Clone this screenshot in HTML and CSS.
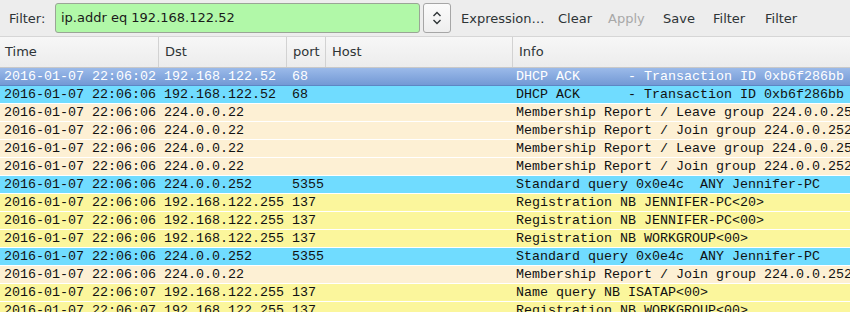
FILE: index.html
```html
<!DOCTYPE html>
<html lang="en">
<head>
    <meta charset="UTF-8">
    <link rel="stylesheet" href="styles.css">
</head>
<body>
<div class="toolbar">
    <span class="filter-label">Filter:</span>
    <div class="filter-input">ip.addr eq 192.168.122.52</div>
    <div class="combo">
        <svg width="10" height="14" viewBox="0 0 10 14">
            <path d="M1.5 5 L5 1.5 L8.5 5 M1.5 9 L5 12.5 L8.5 9" fill="none" stroke="#2e3436" stroke-width="1.4"/>
        </svg>
    </div>
    <span class="tool-btn expr">Expression…</span>
    <span class="tool-btn clear">Clear</span>
    <span class="tool-btn apply disabled">Apply</span>
    <span class="tool-btn save">Save</span>
    <span class="tool-btn filter">Filter</span>
    <span class="tool-btn">Filter</span>
</div>

<div class="list-header">
    <div class="col">Time</div>
    <div class="col">Dst</div>
    <div class="col">port</div>
    <div class="col">Host</div>
    <div class="col last">Info</div>
</div>

<div class="packets" id="packets"></div>

<script>
    const packets = [
        ['2016-01-07 22:06:02', '192.168.122.52', '68', 'DHCP ACK      - Transaction ID 0xb6f286bb', 'selected'],
        ['2016-01-07 22:06:06', '192.168.122.52', '68', 'DHCP ACK      - Transaction ID 0xb6f286bb', 'cyan'],
        ['2016-01-07 22:06:06', '224.0.0.22', '', 'Membership Report / Leave group 224.0.0.252', 'beige'],
        ['2016-01-07 22:06:06', '224.0.0.22', '', 'Membership Report / Join group 224.0.0.252', 'beige'],
        ['2016-01-07 22:06:06', '224.0.0.22', '', 'Membership Report / Leave group 224.0.0.252', 'beige'],
        ['2016-01-07 22:06:06', '224.0.0.22', '', 'Membership Report / Join group 224.0.0.252', 'beige'],
        ['2016-01-07 22:06:06', '224.0.0.252', '5355', 'Standard query 0x0e4c  ANY Jennifer-PC', 'cyan'],
        ['2016-01-07 22:06:06', '192.168.122.255', '137', 'Registration NB JENNIFER-PC<20>', 'yellow'],
        ['2016-01-07 22:06:06', '192.168.122.255', '137', 'Registration NB JENNIFER-PC<00>', 'yellow'],
        ['2016-01-07 22:06:06', '192.168.122.255', '137', 'Registration NB WORKGROUP<00>', 'yellow'],
        ['2016-01-07 22:06:06', '224.0.0.252', '5355', 'Standard query 0x0e4c  ANY Jennifer-PC', 'cyan'],
        ['2016-01-07 22:06:06', '224.0.0.22', '', 'Membership Report / Join group 224.0.0.252', 'beige'],
        ['2016-01-07 22:06:07', '192.168.122.255', '137', 'Name query NB ISATAP<00>', 'yellow'],
        ['2016-01-07 22:06:07', '192.168.122.255', '137', 'Registration NB WORKGROUP<00>', 'yellow']
    ];

    const list = document.getElementById('packets');
    packets.forEach(p => {
        const row = document.createElement('div');
        row.className = 'row ' + p[4];
        [p[0], p[1], p[2], '', p[3]].forEach(text => {
            const cell = document.createElement('span');
            cell.textContent = text;
            row.appendChild(cell);
        });
        list.appendChild(row);
    });
</script>
</body>
</html>
```

FILE: styles.css
```css
body {
    margin: 0;
    width: 850px;
    height: 312px;
    overflow: hidden;
    background: #ffffff;
    font-family: 'DejaVu Sans', sans-serif;
    font-size: 13px;
    color: #2e3436;
}
.toolbar {
    height: 36px;
    display: flex;
    align-items: center;
    background: #ededed;
    border-bottom: 1px solid #d6d6d6;
    padding-left: 9px;
}
.filter-label {
    width: 46px;
    flex-shrink: 0;
}
.filter-input {
    width: 358px;
    height: 28px;
    line-height: 28px;
    padding-left: 5px;
    flex-shrink: 0;
    background: #b1f8a8;
    border: 1px solid #9aa596;
    border-radius: 3px;
    color: #1a1a1a;
}
.combo {
    width: 26px;
    height: 28px;
    margin-left: 3px;
    flex-shrink: 0;
    display: flex;
    align-items: center;
    justify-content: center;
    background: linear-gradient(#fbfbfb, #eeeeee);
    border: 1px solid #a6a6a6;
    border-radius: 3px;
}
.tool-btn {
    flex-shrink: 0;
    white-space: nowrap;
}
.tool-btn.expr {
    margin-left: 10px;
    width: 97px;
}
.tool-btn.clear,
.tool-btn.save {
    width: 50px;
}
.tool-btn.apply {
    width: 55px;
}
.tool-btn.filter {
    width: 52px;
}
.tool-btn.disabled {
    color: #a8a8a8;
}
.list-header {
    height: 30px;
    display: grid;
    grid-template-columns: 159px 128px 39px 187px 1fr;
    align-items: center;
    background: linear-gradient(#f7f7f7, #ececec);
    border-bottom: 1px solid #c8c8c8;
}
.list-header .col {
    height: 30px;
    line-height: 30px;
    padding-left: 6px;
    border-right: 1px solid #d2d2d2;
    box-sizing: border-box;
}
.list-header .col:first-child {
    padding-left: 5px;
}
.list-header .col.last {
    border-right: none;
}
.packets {
    font-family: 'Liberation Mono', monospace;
    font-size: 13.33px;
    color: #111111;
}
.row {
    height: 17px;
    line-height: 17px;
    border-bottom: 1px solid #ffffff;
    display: grid;
    grid-template-columns: 160px 128px 40px 184px 1fr;
    white-space: pre;
    overflow: hidden;
}
.row span {
    padding-left: 4px;
    overflow: hidden;
}
.row.selected {
    background: linear-gradient(#9bbae9, #7399d5);
    border-bottom-color: #5d86c4;
    color: #ffffff;
}
.row.cyan {
    background: #70dcff;
}
.row.beige {
    background: #fdf0d4;
}
.row.yellow {
    background: #fbf69c;
}
```
